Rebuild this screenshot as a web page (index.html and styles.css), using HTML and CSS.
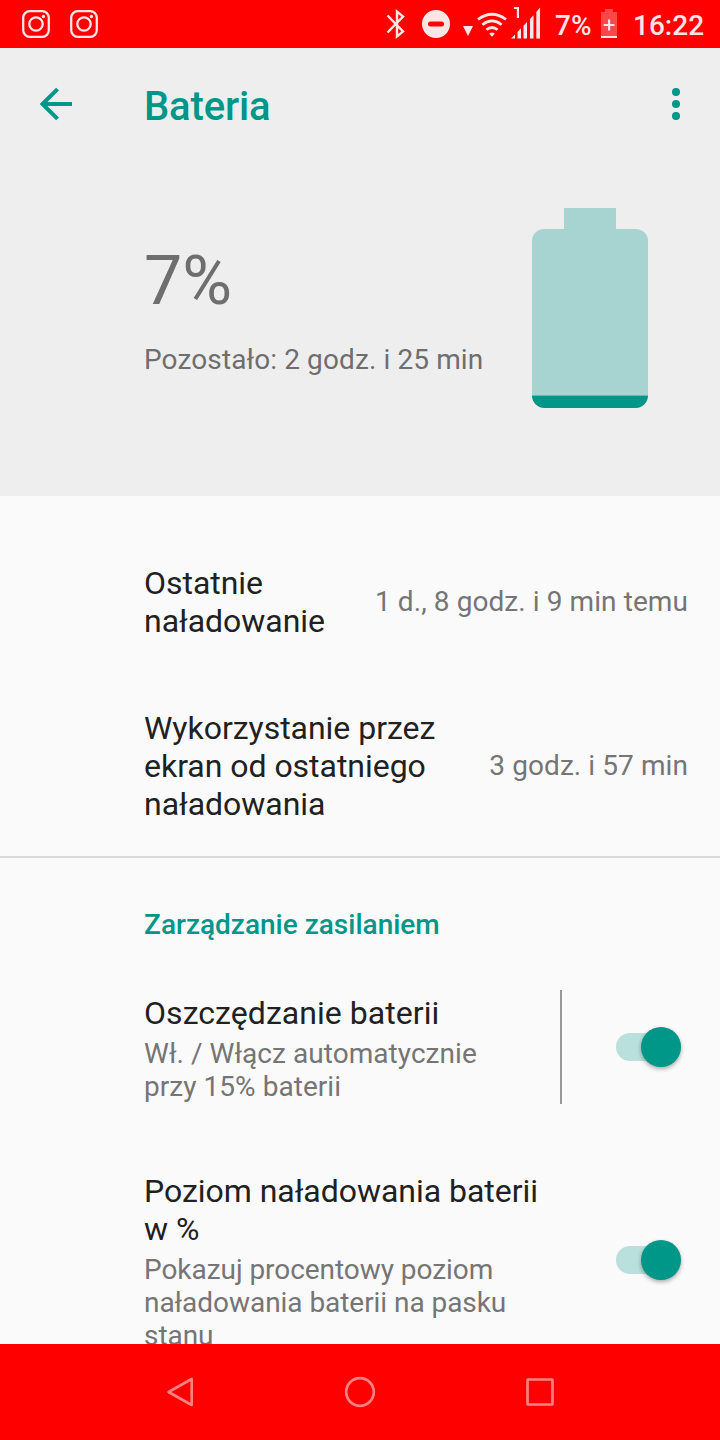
FILE: index.html
```html
<!DOCTYPE html>
<html lang="pl">
<head>
<meta charset="utf-8">
<title>Bateria</title>
<link rel="stylesheet" href="styles.css">
</head>
<body>
<div class="phone">
  <header class="status">
    <svg class="status-icons" width="120" height="48" viewBox="0 0 120 48">
      <g fill="none" stroke="currentColor" stroke-width="2.300">
        <rect x="23.200" y="11.200" width="25.600" height="25.600" rx="6.500"/><circle cx="36" cy="24" r="6.700"/>
        <rect x="71.200" y="11.200" width="25.600" height="25.600" rx="6.500"/><circle cx="84" cy="24" r="6.700"/>
      </g>
      <g fill="currentColor"><circle cx="43.400" cy="16.500" r="1.700"/><circle cx="91.400" cy="16.500" r="1.700"/></g>
    </svg>
    <svg class="status-icons system" width="170" height="48" viewBox="380 0 170 48">
      <path d="M387.500 15.500L403 31.500L397 36.500V11.500L403 16.500L387.500 32.500" fill="none" stroke="currentColor" stroke-width="2.400"/>
      <path fill="currentColor" fill-rule="evenodd" d="M436 10a14 14 0 1 0 0 28a14 14 0 1 0 0-28zM430.500 21.500h11a2.500 2.500 0 0 1 0 5h-11a2.500 2.500 0 0 1 0-5z"/>
      <path fill="currentColor" d="M463 26h10l-5 10zM489.200 33.700q2.800-2.500 5.600 0L492 36.800z"/>
      <g fill="none" stroke="currentColor" stroke-width="2.700">
        <path d="M478 19.500Q492 9 506 19.500M482.300 24.700Q492 17 501.700 24.700M486.400 29.800Q492 25.200 497.600 29.800"/>
      </g>
      <path fill="currentColor" d="M514 7h5v11h-2.200V9H514zM511 38.500l4-4v4zM517.500 32l3.500-3.700v10.200h-3.500zM523.500 25.700l3.500-3.700v16.500h-3.500zM530 19l3.500-3.700v23.200H530zM536.300 12l3.700-4.500v31h-3.700z"/>
    </svg>
    <span class="status-percent">7%</span>
    <svg class="status-battery" width="16" height="30" viewBox="0 0 16 30">
      <path fill="#fff" fill-opacity=".28" d="M4 0h8v3h4v24H0V3h4z"/>
      <path fill="currentColor" d="M0 27h16v2H0zM7 10.500h2.200v4.400h4.300v2.200H9.200v4.400H7v-4.400H2.700v-2.200H7z"/>
    </svg>
    <span class="status-time">16:22</span>
  </header>

  <section class="hero">
    <div class="toolbar">
      <svg class="back" width="34" height="34" viewBox="0 0 34 34"><path d="M33 17H4M18.500 2.200L3.500 17l15 14.800" fill="none" stroke="currentColor" stroke-width="4"/></svg>
      <h1 class="title">Bateria</h1>
      <svg class="more" width="8" height="32" viewBox="0 0 8 32" fill="currentColor"><circle cx="4" cy="4" r="4"/><circle cx="4" cy="16" r="4"/><circle cx="4" cy="28" r="4"/></svg>
    </div>
    <div class="overview">
      <div class="level">
        <div class="level-value">7%</div>
        <div class="level-left">Pozostało: 2 godz. i 25 min</div>
      </div>
      <svg class="battery" width="116" height="200" viewBox="0 0 116 200">
        <path fill="#a7d3d0" d="M32 0h52v21h20a12 12 0 0 1 12 12v154.500H0V33a12 12 0 0 1 12-12h20z"/>
        <path fill="#009688" d="M0 187.500h116a12 12.500 0 0 1-12 12.500H12a12 12.500 0 0 1-12-12.500z"/>
      </svg>
    </div>
  </section>

  <main class="content">
    <div class="stat first">
      <div class="name">Ostatnie<br>naładowanie</div>
      <div class="value">1 d., 8 godz. i 9 min temu</div>
    </div>
    <div class="stat second">
      <div class="name">Wykorzystanie przez<br>ekran od ostatniego<br>naładowania</div>
      <div class="value">3 godz. i 57 min</div>
    </div>
    <h2 class="category">Zarządzanie zasilaniem</h2>
    <div class="setting saver">
      <div class="setting-text">
        <div class="name">Oszczędzanie baterii</div>
        <div class="summary">Wł. / Włącz automatycznie<br>przy 15% baterii</div>
      </div>
      <div class="switch-cell split"><span class="switch"><span class="thumb"></span></span></div>
    </div>
    <div class="setting percent">
      <div class="setting-text">
        <div class="name">Poziom naładowania baterii<br>w %</div>
        <div class="summary tight">Pokazuj procentowy poziom<br>naładowania baterii na pasku<br>stanu</div>
      </div>
      <div class="switch-cell"><span class="switch"><span class="thumb"></span></span></div>
    </div>
  </main>

  <nav class="navbar">
    <svg width="32" height="32" viewBox="0 0 32 32"><path d="M27.700 3v26L4.500 16z"/></svg>
    <svg width="32" height="32" viewBox="0 0 32 32"><circle cx="16" cy="16" r="13.800"/></svg>
    <svg width="32" height="32" viewBox="0 0 32 32"><rect x="3.500" y="3.500" width="25" height="25" rx=".5"/></svg>
  </nav>
</div>
</body>
</html>
```
FILE: styles.css
```css
* { box-sizing: border-box; }
body { margin: 0; font-family: Roboto, "Noto Sans", sans-serif; }
h1, h2 { margin: 0; font-weight: 500; }
svg { display: block; flex: none; }

.phone {
  width: 720px;
  height: 1440px;
  display: flex;
  flex-direction: column;
  overflow: hidden;
  background: #fafafa;
}

.status {
  flex: none;
  height: 48px;
  display: flex;
  align-items: center;
  background: #f00;
  color: #ffe5e5;
  font-size: 28px;
  font-weight: 500;
  line-height: 48px;
}
.system { margin-left: 260px; }
.status-percent { width: 51px; padding: 3px 0 0 5px; }
.status-time { padding: 3px 0 0 16px; }

.hero { flex: none; height: 448px; background: #eee; color: #009688; }
.toolbar {
  height: 112px;
  display: flex;
  align-items: center;
  padding: 0 40px 0 39px;
}
.title { flex: 1; padding: 5px 0 0 71px; font-size: 40px; line-height: 48px; letter-spacing: -.15px; }
.overview { display: flex; justify-content: space-between; padding: 48px 72px 0 144px; }
.level { color: #6e6e6e; white-space: nowrap; }
.level-value { padding-top: 33px; font-size: 68px; line-height: 80px; }
.level-left { padding-top: 22px; font-size: 28px; line-height: 33px; letter-spacing: .11px; }

.content { flex: 1; min-height: 0; overflow: hidden; }
.name { color: #212121; font-size: 32px; line-height: 38px; white-space: nowrap; }
.value, .summary { color: #757575; font-size: 28px; line-height: 33px; white-space: nowrap; }
.value { letter-spacing: .08px; }
.stat {
  display: flex;
  align-items: center;
  justify-content: space-between;
  padding: 0 32px 0 144px;
}
.stat .name { letter-spacing: -.03px; }
.first { height: 76px; margin-top: 68px; }
.first .value { padding-bottom: 2px; }
.second { height: 148px; margin-top: 70px; padding-bottom: 34px; border-bottom: 2px solid #dadada; }
.second .value { padding-bottom: 2px; }
.category { padding: 50px 0 0 144px; color: #009688; font-size: 28px; line-height: 33px; }
.setting { display: flex; justify-content: space-between; padding-left: 144px; }
.saver { height: 114px; margin-top: 49px; }
.saver .setting-text { padding-top: 4px; letter-spacing: .05px; }
.percent { height: 175px; margin-top: 68px; }
.percent .name { letter-spacing: -.03px; }
.summary { padding-top: 5px; }
.tight { letter-spacing: -.05px; }
.switch-cell { width: 160px; display: flex; align-items: center; padding-left: 56px; }
.split { border-left: 2px solid #979797; padding-left: 54px; }
.switch {
  width: 65px;
  height: 28px;
  display: flex;
  align-items: center;
  justify-content: flex-end;
  border-radius: 14px;
  background: #b9e0dc;
}
.thumb {
  width: 40px;
  height: 40px;
  flex: none;
  border-radius: 50%;
  background: #009688;
  box-shadow: 0 2px 4px rgba(0, 0, 0, .32);
}

.navbar {
  flex: none;
  height: 96px;
  display: flex;
  align-items: center;
  justify-content: space-between;
  padding: 0 164px;
  background: #f00;
  fill: none;
  stroke: #ff8080;
  stroke-width: 2.700;
  stroke-linejoin: round;
}
```
